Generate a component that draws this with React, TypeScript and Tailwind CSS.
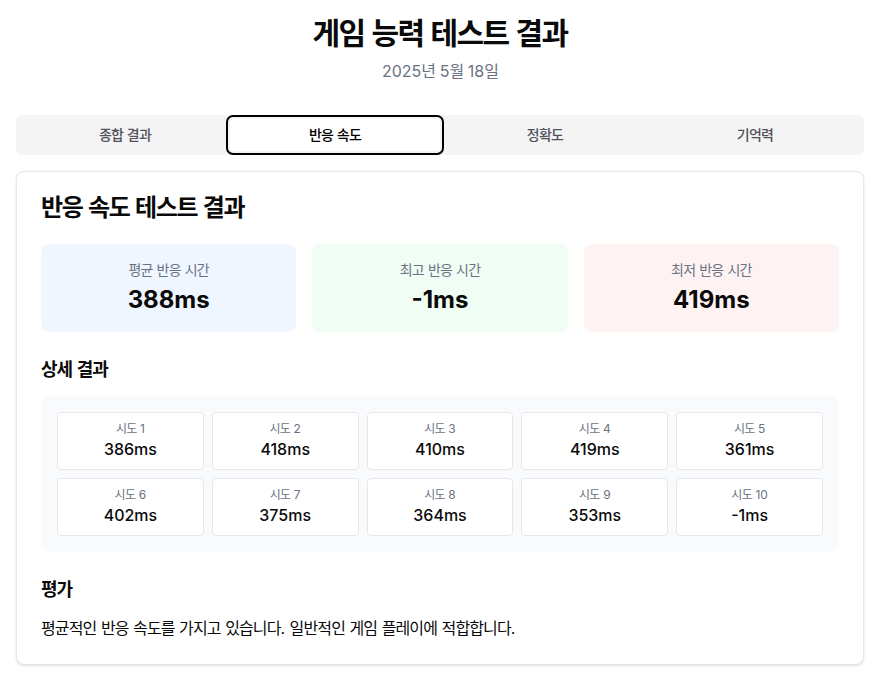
import React from "react";

const tabs = ["종합 결과", "반응 속도", "정확도", "기억력"];
const trials = [386, 418, 410, 419, 361, 402, 375, 364, 353, -1];

function K({ children }: { children: string }) {
  const parts = children.split(/([\uAC00-\uD7A3]+)/);
  return (
    <>
      {parts.map((p, i) =>
        /[\uAC00-\uD7A3]/.test(p) ? (
          <span key={i} className="tracking-[-0.055em]">
            {p}
          </span>
        ) : (
          <React.Fragment key={i}>{p}</React.Fragment>
        )
      )}
    </>
  );
}

export default function App() {
  return (
    <div className="h-screen w-full overflow-hidden bg-white">
      <div
        className="w-[880px] px-4 pb-4 pt-[15px] text-[#0a0a0a]"
        style={{ fontFamily: 'Inter, "Noto Sans CJK KR", "Noto Sans", sans-serif' }}
      >
        <div className="text-center">
          <h1 className="mb-2 text-3xl font-bold">
            <K>게임 능력 테스트 결과</K>
          </h1>
          <p className="text-base text-gray-500">
            <K>2025년 5월 18일</K>
          </p>
        </div>

        <div className="mt-8 grid h-10 grid-cols-4 rounded-md bg-[#f4f4f5] p-1">
          {tabs.map((t, i) => (
            <div
              key={t}
              className={
                i === 1
                  ? "flex items-center justify-center rounded-[3px] bg-white text-sm font-medium text-black outline-2 outline-offset-2 outline-black outline"
                  : "flex items-center justify-center text-sm font-medium text-[#52525b]"
              }
            >
              <span>
                <K>{t}</K>
              </span>
            </div>
          ))}
        </div>

        <div className="mt-4 rounded-lg border border-gray-200 bg-white shadow-sm">
          <div className="p-6">
            <h2 className="text-2xl font-semibold leading-none tracking-tight">
              <K>반응 속도 테스트 결과</K>
            </h2>
          </div>
          <div className="px-6 pb-6">
            <div className="grid grid-cols-3 gap-4">
              <div className="rounded-lg bg-[#eff6ff] py-4 text-center">
                <p className="text-sm text-gray-500">
                  <K>평균 반응 시간</K>
                </p>
                <p className="mt-1 text-2xl font-bold">388ms</p>
              </div>
              <div className="rounded-lg bg-[#f0fdf4] py-4 text-center">
                <p className="text-sm text-gray-500">
                  <K>최고 반응 시간</K>
                </p>
                <p className="mt-1 text-2xl font-bold">-1ms</p>
              </div>
              <div className="rounded-lg bg-[#fef2f2] py-4 text-center">
                <p className="text-sm text-gray-500">
                  <K>최저 반응 시간</K>
                </p>
                <p className="mt-1 text-2xl font-bold">419ms</p>
              </div>
            </div>

            <h3 className="mt-6 text-lg font-semibold">
              <K>상세 결과</K>
            </h3>
            <div className="mt-3 rounded-lg bg-gray-50 p-4">
              <div className="grid grid-cols-5 gap-2">
                {trials.map((v, i) => (
                  <div key={i} className="rounded border border-gray-200 bg-white p-2 text-center">
                    <p className="text-xs text-gray-500">
                      <K>{`시도 ${i + 1}`}</K>
                    </p>
                    <p className="text-base font-medium">{v}ms</p>
                  </div>
                ))}
              </div>
            </div>

            <h3 className="mt-6 text-lg font-semibold">
              <K>평가</K>
            </h3>
            <p className="mt-3 text-base">
              <K>평균적인 반응 속도를 가지고 있습니다. 일반적인 게임 플레이에 적합합니다.</K>
            </p>
          </div>
        </div>
      </div>
    </div>
  );
}
